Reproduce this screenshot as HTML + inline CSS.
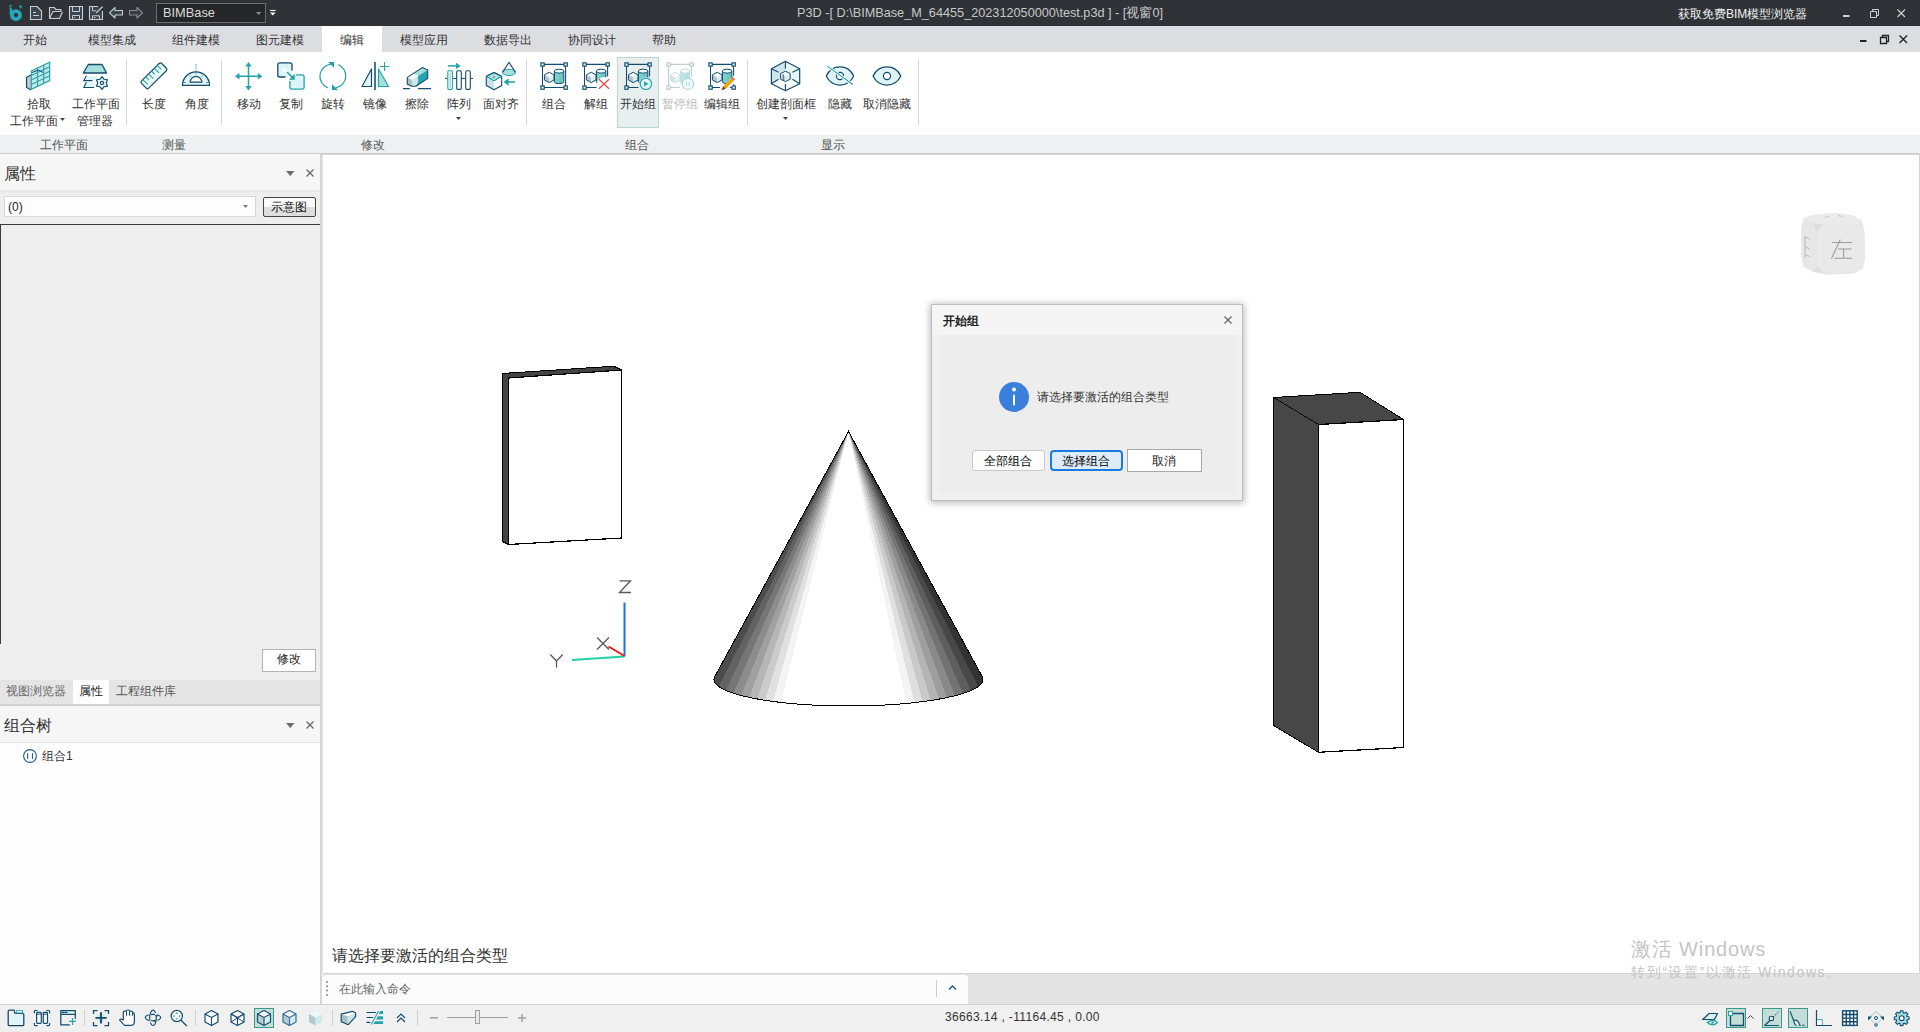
<!DOCTYPE html><html><head><meta charset="utf-8"><style>
*{box-sizing:border-box}
html,body{margin:0;padding:0;width:1920px;height:1032px;overflow:hidden;background:#fff;font-family:"Liberation Sans",sans-serif}
.t{position:absolute;white-space:nowrap;line-height:1}
.r{position:absolute}
svg{position:absolute;overflow:visible}
</style></head><body><div class="r" style="left:0px;top:0px;width:1920px;height:26px;background:#2f3337;"></div>
<svg style="left:0;top:0" width="300" height="26"><circle cx="16" cy="15.2" r="4" fill="none" stroke="#24a8b8" stroke-width="3.8"/><path d="M11 15V9" stroke="#24a8b8" stroke-width="2.6"/><path d="M9.3 5.6H11.8L9.5 8.3H12" stroke="#24a8b8" stroke-width="0.9" fill="none"/><path d="M20.6 5V8.6M18.8 6.8H22.4" stroke="#24a8b8" stroke-width="1"/><path d="M30.5 6.5H37L41.5 11V19.5H30.5Z" fill="#3a4652" stroke="#c9cdd0" stroke-width="1.1" stroke-linejoin="round"/><path d="M33 12.5H36M33 15.5H39" stroke="#c9cdd0" stroke-width="1"/><path d="M49.5 18.5V7.5H54L56 9.5H61V11.5H53L49.5 18.5H59.5L62.5 12" fill="#3a4652" stroke="#c9cdd0" stroke-width="1.1" stroke-linejoin="round"/><path d="M69.5 6.5H82.5V19.5H69.5Z" fill="#3a4652" stroke="#c9cdd0" stroke-width="1.1" stroke-linejoin="round"/><path d="M72.5 6.5V11.5H79.5V6.5M72.5 19.5V15.5H79.5V19.5" stroke="#c9cdd0" stroke-width="1" fill="none"/><rect x="74" y="17" width="1" height="1" fill="#c9cdd0"/><path d="M89.5 6.5H98.5L102.5 10.5V19.5H89.5Z" fill="#3a4652"/><path d="M98 6.5H89.5V19.5H102.5V11" fill="none" stroke="#c9cdd0" stroke-width="1.1" stroke-linejoin="round"/><path d="M92.5 6.5V10.8H96.5M92.5 19.5V15.8H99.5V19.5" stroke="#c9cdd0" stroke-width="1" fill="none"/><path d="M96 13L102.5 6.7" stroke="#2f3337" stroke-width="2.6"/><path d="M96 13L102.5 6.7" stroke="#c9cdd0" stroke-width="1.3"/><rect x="94" y="17" width="1.2" height="1.2" fill="#c9cdd0"/><path d="M109.5 12.8L115 7.5V10.5H122.5V15H115V18Z" fill="#3a4652" stroke="#c9cdd0" stroke-width="1.1" stroke-linejoin="round"/><path d="M142.5 12.8L137 7.5V10.5H129.5V15H137V18Z" fill="#333a42" stroke="#8a9096" stroke-width="1.1" stroke-linejoin="round"/></svg>
<div class="r" style="left:156px;top:3px;width:110px;height:20px;background:#252628;border:1px solid #6e6e6e"></div>
<div class="t" style="left:163px;top:7px;font-size:12.8px;color:#dcdcdc;">BIMBase</div>
<svg style="left:256px;top:12px" width="7" height="4"><path d="M0 0H5.5L2.75 3z" fill="#8a8a8a"/></svg>
<svg style="left:270px;top:9px" width="7" height="8"><path d="M0 1.5H5.6" stroke="#fff" stroke-width="1.1"/><path d="M0 3.6H5.6L2.8 6.6Z" fill="#fff"/></svg>
<div class="t" style="left:797px;top:7px;font-size:12.7px;color:#c8c8c8;">P3D -[ D:\BIMBase_M_64455_202312050000\test.p3d ] - [视窗0]</div>
<div class="t" style="left:1678px;top:8px;font-size:12px;color:#f2f2f2;">获取免费BIM模型浏览器</div>
<svg style="left:1843px;top:15px" width="8" height="3"><rect x="0" y="0" width="6.5" height="2" fill="#cfcfcf"/></svg>
<svg style="left:1870px;top:9px" width="9" height="9"><path d="M2.5 2.5V0.5H8.5V6.5H6.5M0.5 2.5H6.5V8.5H0.5Z" fill="none" stroke="#cfcfcf"/></svg>
<svg style="left:1897px;top:9px" width="9" height="9"><path d="M0.5 0.5L8 8M8 0.5L0.5 8" stroke="#cfcfcf" stroke-width="1.2"/></svg>
<div class="r" style="left:0px;top:26px;width:1920px;height:26px;background:#dcdde0;"></div>
<div class="r" style="left:322px;top:26px;width:60px;height:26px;background:#ffffff;"></div>
<div class="t" style="left:23px;top:34px;font-size:12px;color:#333;">开始</div>
<div class="t" style="left:88px;top:34px;font-size:12px;color:#333;">模型集成</div>
<div class="t" style="left:172px;top:34px;font-size:12px;color:#333;">组件建模</div>
<div class="t" style="left:256px;top:34px;font-size:12px;color:#333;">图元建模</div>
<div class="t" style="left:340px;top:34px;font-size:12px;color:#333;">编辑</div>
<div class="t" style="left:400px;top:34px;font-size:12px;color:#333;">模型应用</div>
<div class="t" style="left:484px;top:34px;font-size:12px;color:#333;">数据导出</div>
<div class="t" style="left:568px;top:34px;font-size:12px;color:#333;">协同设计</div>
<div class="t" style="left:652px;top:34px;font-size:12px;color:#333;">帮助</div>
<svg style="left:1860px;top:40px" width="8" height="3"><rect x="0" y="0" width="6.5" height="2" fill="#222"/></svg>
<svg style="left:1880px;top:35px" width="9" height="9"><path d="M2.5 2.5V0.5H8.5V6.5H6.5M0.5 2.5H6.5V8.5H0.5Z" fill="none" stroke="#222" stroke-width="1.3"/></svg>
<svg style="left:1899px;top:35px" width="9" height="9"><path d="M0.5 0.5L8 8M8 0.5L0.5 8" stroke="#222" stroke-width="1.4"/></svg>
<div class="r" style="left:0px;top:52px;width:1920px;height:83px;background:#ffffff;"></div>
<div class="r" style="left:0px;top:135px;width:1920px;height:18px;background:#eef1f2;"></div>
<div class="r" style="left:0px;top:153px;width:1920px;height:1px;background:#c9cbcd;"></div>
<div class="r" style="left:617px;top:57px;width:42px;height:71px;background:#e7f0ef;border:1px solid #b9d8d3"></div>
<svg style="left:0;top:0" width="1000" height="135"><path d="M31 75L26.5 77.3V87.5L31 90" fill="#bfc9cd" stroke="#134b6e" stroke-width="1.2"/><path d="M31.3 71L49.7 62.3V80.5L31.3 89.3Z" fill="#c5e7ea" stroke="#25a3ab" stroke-width="1.2"/><path d="M37.5 68V86.3M43.7 65.2V83.4M31.3 75.5L49.7 66.8M31.3 80L49.7 71.3M31.3 84.5L49.7 75.8" stroke="#25a3ab" stroke-width="1.1"/><path d="M32 72.5L38.5 70L43 72.5" fill="none" stroke="#134b6e" stroke-width="1"/><path d="M88.3 64.5H102L106.5 73H83.3Z" fill="#a6dfdb" stroke="#134b6e" stroke-width="1.3" stroke-linejoin="round"/><path d="M86.5 75.7L84 80.5H92.5M86.5 82.2L84 87.3H94" fill="none" stroke="#134b6e" stroke-width="1.3"/><path d="M87 76H99L96 80H85ZM87 82.5H96L95 87H85Z" fill="#e0f5f6"/><path d="M102.00 76.70L99.85 79.28L96.54 79.85L97.70 83.00L96.54 86.15L99.85 86.72L102.00 89.30L104.15 86.72L107.46 86.15L106.30 83.00L107.46 79.85L104.15 79.28Z" fill="#e2f4f6" stroke="#134b6e" stroke-width="1.2" stroke-linejoin="round"/><circle cx="102" cy="83" r="1.6" fill="none" stroke="#134b6e" stroke-width="1.1"/><rect x="139.8" y="70.65" width="28.3" height="10.3" rx="1.8" transform="rotate(-44.6 153.95 75.8)" fill="#eaf8f8" stroke="#134b6e" stroke-width="1.2"/><path d="M142.60 79.30l5.00 5.00M145.45 76.45l3.60 3.60M148.30 73.60l5.00 5.00M151.15 70.75l3.60 3.60M154.00 67.90l5.00 5.00M156.85 65.05l4.40 4.40" stroke="#25a3ab" stroke-width="1.1"/><path d="M182.5 85.3A13.5 13.5 0 0 1 209.5 85.3Z" fill="#e0f5f6" stroke="#134b6e" stroke-width="1.3"/><path d="M190.2 82.2A5.8 5.8 0 0 1 201.8 82.2Z" fill="#fff" stroke="#134b6e" stroke-width="1.2"/><path d="M196 64V71" stroke="#25a3ab" stroke-width="1.1" stroke-dasharray="1.2 1"/><path d="M196 72.5V74M184 82.5H185.8M206.2 82.5H208M189.5 75.5L190.5 76.5M202.5 75.5L201.5 76.5" stroke="#25a3ab" stroke-width="1"/><path d="M248.5 65V87.5M237 76.3H260" stroke="#25a3ab" stroke-width="1.5"/><path d="M248.5 62L245.3 66.5H251.7ZM248.5 90.5L245.3 86H251.7ZM235 76.3L239.5 73.1V79.5ZM262.3 76.3L257.8 73.1V79.5Z" fill="#25a3ab"/><rect x="277.8" y="62.8" width="14.2" height="14.2" rx="2" fill="#ddf5f7"/><path d="M285.5 77H279.8A2 2 0 0 1 277.8 75V64.8A2 2 0 0 1 279.8 62.8H290A2 2 0 0 1 292 64.8V70.5" fill="none" stroke="#134b6e" stroke-width="1.3"/><rect x="289.9" y="74.9" width="14.2" height="14.2" rx="2" fill="#ddf5f7"/><path d="M296 74.9H302.1A2 2 0 0 1 304.1 76.9V87.1A2 2 0 0 1 302.1 89.1H291.9A2 2 0 0 1 289.9 87.1V81" fill="none" stroke="#25a3ab" stroke-width="1.3"/><path d="M283 68.5L290 75.5" stroke="#fff" stroke-width="3"/><path d="M287 72L292 77" stroke="#25a3ab" stroke-width="1.7"/><path d="M294.8 79.7V73.8L288.9 79.7Z" fill="#25a3ab"/><path d="M331.5 64.2A12.2 12.2 0 0 0 327.8 87.8" fill="none" stroke="#25a3ab" stroke-width="1.25"/><path d="M338.3 64.6A12.2 12.2 0 0 1 335.5 87.9" fill="none" stroke="#25a3ab" stroke-width="1.25"/><path d="M328.2 62H334V67.9ZM332 84V89.9H337.9Z" fill="#25a3ab"/><path d="M375 62V90" stroke="#0f5676" stroke-width="1.6"/><path d="M371.5 69V86.5H362Z" fill="#e3f6f7" stroke="#134b6e" stroke-width="1.2" stroke-linejoin="round"/><path d="M378.5 69V86.5H388.5Z" fill="#a6dfdb" stroke="#25a3ab" stroke-width="1.2" stroke-linejoin="round"/><path d="M384.5 62V71M380.2 66.5H389" stroke="#25a3ab" stroke-width="1.1"/><path d="M407.3 77.4L413.5 73.3L418.1 76L411.9 79.7Z" fill="#fff"/><path d="M413.5 73.3L422.3 67.6L427.7 70.1L418.1 76Z" fill="#a6dfdb"/><path d="M407.3 77.4L411.9 79.7V86.3L407.3 84.2Z" fill="#aabfc2"/><path d="M411.9 79.7L418.1 76V82.3L416 86.3H411.9Z" fill="#cde8ec"/><path d="M418.1 76L427.7 70.1V78.4L416 86.3L418.1 82.3Z" fill="#25a3ab"/><path d="M407.3 77.4L422.3 67.6L427.7 70.1V78.4L416 86.3H411.9L407.3 84.2Z" fill="none" stroke="#134b6e" stroke-width="1.1" stroke-linejoin="round"/><path d="M403 88.6H409.8M418.1 88.6H431" stroke="#134b6e" stroke-width="1.1"/><path d="M448 65.9H456.5" stroke="#25a3ab" stroke-width="1.5"/><path d="M460.7 65.9L456 62.8V69Z" fill="#25a3ab"/><path d="M445 78.4H473" stroke="#134b6e" stroke-width="1"/><rect x="447.8" y="70.8" width="4.6" height="18.6" rx="1.2" fill="#fff" stroke="#25a3ab" stroke-width="1.1"/><rect x="449.4" y="72.3" width="1.5" height="15.6" fill="#a6dfdb"/><rect x="456.7" y="70.8" width="4.6" height="18.6" rx="1.2" fill="#fff" stroke="#134b6e" stroke-width="1.1"/><rect x="465.7" y="70.8" width="4.6" height="18.6" rx="1.2" fill="#fff" stroke="#134b6e" stroke-width="1.1"/><path d="M486.3 76.3L494 80.8V89.7L486.3 85.5Z" fill="#c9e4e8"/><path d="M486.3 76.3L494 72.4L501.7 76.3L494 80.8Z" fill="#a6e3e3" stroke="#25a3ab" stroke-width="1"/><path d="M486.3 76.3L494 72.4L501.7 76.3V85.5L494 89.7L486.3 85.5Z" fill="none" stroke="#134b6e" stroke-width="1.1" stroke-linejoin="round"/><path d="M486.3 76.3L494 80.8L501.7 76.3" fill="none" stroke="#25a3ab" stroke-width="1"/><rect x="493.2" y="76.3" width="1.6" height="1.6" fill="#e8524f"/><ellipse cx="509" cy="72.4" rx="6.6" ry="3.1" fill="#a6dfdb" stroke="#25a3ab" stroke-width="1"/><path d="M502.5 72.4L509 62.3L515.5 72.4" fill="none" stroke="#134b6e" stroke-width="1.1" stroke-linejoin="round"/><path d="M507.5 82H515" stroke="#25a3ab" stroke-width="1.6"/><path d="M503.6 82L508.6 78.3V85.8Z" fill="#25a3ab"/><path d="M542.5 64.35H565.5999999999999V87.45H542.5Z" fill="none" stroke="#134b6e" stroke-width="1.05"/><rect x="540.9" y="62.85" width="3.3" height="3.3" fill="#e6f6f8" stroke="#134b6e" stroke-width="1.15"/><rect x="564.0" y="62.85" width="3.3" height="3.3" fill="#e6f6f8" stroke="#134b6e" stroke-width="1.15"/><rect x="540.9" y="85.94999999999999" width="3.3" height="3.3" fill="#e6f6f8" stroke="#134b6e" stroke-width="1.15"/><rect x="564.0" y="85.94999999999999" width="3.3" height="3.3" fill="#e6f6f8" stroke="#134b6e" stroke-width="1.15"/><g opacity="1.0"><path d="M554.3999999999999 71.15V81.65A4.7 2 0 0 0 563.8 81.65V71.15Z" fill="#6cc7c1"/><path d="M554.3999999999999 73.15V81.65A4.7 2 0 0 0 559.0999999999999 83.65V73.15Z" fill="#8ad3ce" opacity="0.6"/><ellipse cx="559.0999999999999" cy="71.15" rx="4.7" ry="2" fill="#f2fbfb"/><path d="M554.3999999999999 71.15V81.65A4.7 2 0 0 0 563.8 81.65V71.15A4.7 2 0 0 0 554.3999999999999 71.15A4.7 2 0 0 0 563.8 71.15" fill="none" stroke="#134b6e" stroke-width="1"/><path d="M544.4 74.85L549.1999999999999 72.25L553.9999999999999 74.85L549.1999999999999 77.45Z" fill="#fdfefe"/><path d="M544.4 74.85L549.1999999999999 77.45V82.6L544.4 79.95Z" fill="#b4c6ca"/><path d="M553.9999999999999 74.85L549.1999999999999 77.45V82.6L553.9999999999999 79.95Z" fill="#d5eef0"/><path d="M544.4 74.85L549.1999999999999 72.25L553.9999999999999 74.85V79.95L549.1999999999999 82.6L544.4 79.95Z" fill="none" stroke="#134b6e" stroke-width="1" stroke-linejoin="round"/></g><path d="M607.5999999999999 76.55V64.35H584.5V87.45H596.6" fill="none" stroke="#134b6e" stroke-width="1.05"/><rect x="582.9" y="62.85" width="3.3" height="3.3" fill="#e6f6f8" stroke="#134b6e" stroke-width="1.15"/><rect x="606.0" y="62.85" width="3.3" height="3.3" fill="#e6f6f8" stroke="#134b6e" stroke-width="1.15"/><rect x="582.9" y="85.94999999999999" width="3.3" height="3.3" fill="#e6f6f8" stroke="#134b6e" stroke-width="1.15"/><g opacity="1.0"><path d="M596.3999999999999 71.15V81.65A4.7 2 0 0 0 605.8 81.65V71.15Z" fill="#6cc7c1"/><path d="M596.3999999999999 73.15V81.65A4.7 2 0 0 0 601.0999999999999 83.65V73.15Z" fill="#8ad3ce" opacity="0.6"/><ellipse cx="601.0999999999999" cy="71.15" rx="4.7" ry="2" fill="#f2fbfb"/><path d="M596.3999999999999 71.15V81.65A4.7 2 0 0 0 605.8 81.65V71.15A4.7 2 0 0 0 596.3999999999999 71.15A4.7 2 0 0 0 605.8 71.15" fill="none" stroke="#134b6e" stroke-width="1"/><path d="M586.4 74.85L591.1999999999999 72.25L595.9999999999999 74.85L591.1999999999999 77.45Z" fill="#fdfefe"/><path d="M586.4 74.85L591.1999999999999 77.45V82.6L586.4 79.95Z" fill="#b4c6ca"/><path d="M595.9999999999999 74.85L591.1999999999999 77.45V82.6L595.9999999999999 79.95Z" fill="#d5eef0"/><path d="M586.4 74.85L591.1999999999999 72.25L595.9999999999999 74.85V79.95L591.1999999999999 82.6L586.4 79.95Z" fill="none" stroke="#134b6e" stroke-width="1" stroke-linejoin="round"/></g><circle cx="604" cy="84" r="7" fill="#fff"/><path d="M599 79.3L609 88.8M609 79.3L599 88.8" stroke="#ee4b48" stroke-width="1.3"/><path d="M649.5999999999999 76.55V64.35H626.5V87.45H638.4" fill="none" stroke="#134b6e" stroke-width="1.05"/><rect x="624.9" y="62.85" width="3.3" height="3.3" fill="#e6f3f2" stroke="#134b6e" stroke-width="1.15"/><rect x="648.0" y="62.85" width="3.3" height="3.3" fill="#e6f3f2" stroke="#134b6e" stroke-width="1.15"/><rect x="624.9" y="85.94999999999999" width="3.3" height="3.3" fill="#e6f3f2" stroke="#134b6e" stroke-width="1.15"/><g opacity="1.0"><path d="M638.3999999999999 71.15V81.65A4.7 2 0 0 0 647.8 81.65V71.15Z" fill="#6cc7c1"/><path d="M638.3999999999999 73.15V81.65A4.7 2 0 0 0 643.0999999999999 83.65V73.15Z" fill="#8ad3ce" opacity="0.6"/><ellipse cx="643.0999999999999" cy="71.15" rx="4.7" ry="2" fill="#f2fbfb"/><path d="M638.3999999999999 71.15V81.65A4.7 2 0 0 0 647.8 81.65V71.15A4.7 2 0 0 0 638.3999999999999 71.15A4.7 2 0 0 0 647.8 71.15" fill="none" stroke="#134b6e" stroke-width="1"/><path d="M628.4 74.85L633.1999999999999 72.25L637.9999999999999 74.85L633.1999999999999 77.45Z" fill="#fdfefe"/><path d="M628.4 74.85L633.1999999999999 77.45V82.6L628.4 79.95Z" fill="#b4c6ca"/><path d="M637.9999999999999 74.85L633.1999999999999 77.45V82.6L637.9999999999999 79.95Z" fill="#d5eef0"/><path d="M628.4 74.85L633.1999999999999 72.25L637.9999999999999 74.85V79.95L633.1999999999999 82.6L628.4 79.95Z" fill="none" stroke="#134b6e" stroke-width="1" stroke-linejoin="round"/></g><circle cx="645.9" cy="83.8" r="6.8" fill="#e7f0ef"/><circle cx="645.9" cy="83.8" r="5.7" fill="#e3f4f4" stroke="#25a3ab" stroke-width="1.2"/><path d="M644 81.2V86.4L648.5 83.8Z" fill="#25a3ab"/><path d="M691.5999999999999 76.55V64.35H668.5V87.45H680.4" fill="none" stroke="#bccdd3" stroke-width="1.05"/><rect x="666.9" y="62.85" width="3.3" height="3.3" fill="#f4fafb" stroke="#bccdd3" stroke-width="1.15"/><rect x="690.0" y="62.85" width="3.3" height="3.3" fill="#f4fafb" stroke="#bccdd3" stroke-width="1.15"/><rect x="666.9" y="85.94999999999999" width="3.3" height="3.3" fill="#f4fafb" stroke="#bccdd3" stroke-width="1.15"/><g opacity="0.5"><path d="M680.3999999999999 71.15V81.65A4.7 2 0 0 0 689.8 81.65V71.15Z" fill="#6cc7c1"/><path d="M680.3999999999999 73.15V81.65A4.7 2 0 0 0 685.0999999999999 83.65V73.15Z" fill="#8ad3ce" opacity="0.6"/><ellipse cx="685.0999999999999" cy="71.15" rx="4.7" ry="2" fill="#f2fbfb"/><path d="M680.3999999999999 71.15V81.65A4.7 2 0 0 0 689.8 81.65V71.15A4.7 2 0 0 0 680.3999999999999 71.15A4.7 2 0 0 0 689.8 71.15" fill="none" stroke="#8fb0bd" stroke-width="1"/><path d="M670.4 74.85L675.1999999999999 72.25L679.9999999999999 74.85L675.1999999999999 77.45Z" fill="#fdfefe"/><path d="M670.4 74.85L675.1999999999999 77.45V82.6L670.4 79.95Z" fill="#b4c6ca"/><path d="M679.9999999999999 74.85L675.1999999999999 77.45V82.6L679.9999999999999 79.95Z" fill="#d5eef0"/><path d="M670.4 74.85L675.1999999999999 72.25L679.9999999999999 74.85V79.95L675.1999999999999 82.6L670.4 79.95Z" fill="none" stroke="#8fb0bd" stroke-width="1" stroke-linejoin="round"/></g><circle cx="687.9" cy="83.8" r="5.7" fill="#f2fafa" stroke="#a6d8da" stroke-width="1.1"/><path d="M686.5 81.5V86M689.3 81.5V86" stroke="#a6d8da" stroke-width="1"/><path d="M733.5999999999999 76.55V64.35H710.5V87.45H720.0999999999999M728.3 87.45H733.5999999999999V82.25" fill="none" stroke="#134b6e" stroke-width="1.05"/><rect x="708.9" y="62.85" width="3.3" height="3.3" fill="#e6f6f8" stroke="#134b6e" stroke-width="1.15"/><rect x="732.0" y="62.85" width="3.3" height="3.3" fill="#e6f6f8" stroke="#134b6e" stroke-width="1.15"/><rect x="708.9" y="85.94999999999999" width="3.3" height="3.3" fill="#e6f6f8" stroke="#134b6e" stroke-width="1.15"/><rect x="732.0" y="85.94999999999999" width="3.3" height="3.3" fill="#e6f6f8" stroke="#134b6e" stroke-width="1.15"/><g opacity="1.0"><path d="M722.3999999999999 71.15V81.65A4.7 2 0 0 0 731.8 81.65V71.15Z" fill="#6cc7c1"/><path d="M722.3999999999999 73.15V81.65A4.7 2 0 0 0 727.0999999999999 83.65V73.15Z" fill="#8ad3ce" opacity="0.6"/><ellipse cx="727.0999999999999" cy="71.15" rx="4.7" ry="2" fill="#f2fbfb"/><path d="M722.3999999999999 71.15V81.65A4.7 2 0 0 0 731.8 81.65V71.15A4.7 2 0 0 0 722.3999999999999 71.15A4.7 2 0 0 0 731.8 71.15" fill="none" stroke="#134b6e" stroke-width="1"/><path d="M712.4 74.85L717.1999999999999 72.25L721.9999999999999 74.85L717.1999999999999 77.45Z" fill="#fdfefe"/><path d="M712.4 74.85L717.1999999999999 77.45V82.6L712.4 79.95Z" fill="#b4c6ca"/><path d="M721.9999999999999 74.85L717.1999999999999 77.45V82.6L721.9999999999999 79.95Z" fill="#d5eef0"/><path d="M712.4 74.85L717.1999999999999 72.25L721.9999999999999 74.85V79.95L717.1999999999999 82.6L712.4 79.95Z" fill="none" stroke="#134b6e" stroke-width="1" stroke-linejoin="round"/></g><path d="M719.5 90L735.5 74L738 80L724 93Z" fill="#fff"/><path d="M723.3 86.3L731.5 78.1L733.9 80.5L725.7 88.7Z" fill="#f5a000"/><path d="M731.5 78.1L732.6 77L735 79.4L733.9 80.5Z" fill="#f04a4a"/><path d="M721.5 90.3L723.3 86.3L725.7 88.7Z" fill="#6b3a1a"/><path d="M771.4 68.75L785.4 61.25V76.25L771.4 83.75Z" fill="#cfe7ec"/><path d="M785.4 61.25L799.7 68.75V83.75L785.4 76.25Z" fill="#e8f6f8"/><path d="M771.4 83.75L785.4 76.25L799.7 83.75L785.4 90.7Z" fill="#f7fcfc"/><path d="M785.4 61.25L799.7 68.75V83.75L785.4 90.7L771.4 83.75V68.75Z" fill="none" stroke="#134b6e" stroke-width="1.2" stroke-linejoin="round"/><path d="M785.4 61.25V68.75M771.4 68.75L778.5 72.2M799.7 68.75L792.4 72.2M771.4 83.75L778.5 79.3M799.7 83.75L792.4 79.3M785.4 90.7V84.1" stroke="#134b6e" stroke-width="1.1"/><path d="M780.6 73.5L785.4 71.2L790.2 73.5V79.2L785.4 81.6L780.6 79.2Z" fill="#fff"/><path d="M782.5 74.5L785.4 76V81.3L782.5 79.8Z" fill="#b9cbd0"/><path d="M785.4 76L790 73.8V79.2L785.4 81.5Z" fill="#d8eef1"/><path d="M780.6 73.5L785.4 71.2L790.2 73.5V79.2L785.4 81.6L780.6 79.2Z" fill="none" stroke="#134b6e" stroke-width="1" stroke-linejoin="round"/><path d="M783.2 74.2V80.6" stroke="#134b6e" stroke-width="0.8"/><path d="M826.3 76C832 63.9 848 63.9 853.7 76C848 88.1 832 88.1 826.3 76Z" fill="#e0f4f6" stroke="#134b6e" stroke-width="1.25"/><circle cx="840" cy="76" r="3.6" fill="#fff" stroke="#134b6e" stroke-width="1.2"/><path d="M827.3 66.1L852.8 84.5" stroke="#fff" stroke-width="3"/><path d="M827.3 66.1L852.8 84.5" stroke="#25a3ab" stroke-width="1.1"/><path d="M873.1 76C878.8 63.9 895 63.9 900.8 76C895 88.1 878.8 88.1 873.1 76Z" fill="#e0f4f6" stroke="#134b6e" stroke-width="1.25"/><circle cx="887" cy="76" r="3.6" fill="#fff" stroke="#134b6e" stroke-width="1.2"/></svg>
<div class="t" style="left:-21px;width:120px;text-align:center;top:98px;font-size:12px;color:#333">拾取</div>
<div class="t" style="left:36px;width:120px;text-align:center;top:98px;font-size:12px;color:#333">工作平面</div>
<div class="t" style="left:94px;width:120px;text-align:center;top:98px;font-size:12px;color:#333">长度</div>
<div class="t" style="left:137px;width:120px;text-align:center;top:98px;font-size:12px;color:#333">角度</div>
<div class="t" style="left:189px;width:120px;text-align:center;top:98px;font-size:12px;color:#333">移动</div>
<div class="t" style="left:231px;width:120px;text-align:center;top:98px;font-size:12px;color:#333">复制</div>
<div class="t" style="left:273px;width:120px;text-align:center;top:98px;font-size:12px;color:#333">旋转</div>
<div class="t" style="left:315px;width:120px;text-align:center;top:98px;font-size:12px;color:#333">镜像</div>
<div class="t" style="left:357px;width:120px;text-align:center;top:98px;font-size:12px;color:#333">擦除</div>
<div class="t" style="left:399px;width:120px;text-align:center;top:98px;font-size:12px;color:#333">阵列</div>
<div class="t" style="left:441px;width:120px;text-align:center;top:98px;font-size:12px;color:#333">面对齐</div>
<div class="t" style="left:494px;width:120px;text-align:center;top:98px;font-size:12px;color:#333">组合</div>
<div class="t" style="left:536px;width:120px;text-align:center;top:98px;font-size:12px;color:#333">解组</div>
<div class="t" style="left:578px;width:120px;text-align:center;top:98px;font-size:12px;color:#333">开始组</div>
<div class="t" style="left:620px;width:120px;text-align:center;top:98px;font-size:12px;color:#b8bcbf">暂停组</div>
<div class="t" style="left:662px;width:120px;text-align:center;top:98px;font-size:12px;color:#333">编辑组</div>
<div class="t" style="left:726px;width:120px;text-align:center;top:98px;font-size:12px;color:#333">创建剖面框</div>
<div class="t" style="left:780px;width:120px;text-align:center;top:98px;font-size:12px;color:#333">隐藏</div>
<div class="t" style="left:827px;width:120px;text-align:center;top:98px;font-size:12px;color:#333">取消隐藏</div>
<div class="t" style="left:10px;top:115px;font-size:12px;color:#333;">工作平面</div>
<div class="t" style="left:35px;width:120px;text-align:center;top:115px;font-size:12px;color:#333">管理器</div>
<svg style="left:60px;top:118px" width="6" height="4"><path d="M0 0H5L2.5 3z" fill="#444"/></svg>
<svg style="left:456px;top:117px" width="6" height="4"><path d="M0 0H5L2.5 3z" fill="#444"/></svg>
<svg style="left:783px;top:117px" width="6" height="4"><path d="M0 0H5L2.5 3z" fill="#444"/></svg>
<div class="r" style="left:126px;top:60px;width:1px;height:65px;background:#d5d7d9;"></div>
<div class="r" style="left:221px;top:60px;width:1px;height:65px;background:#d5d7d9;"></div>
<div class="r" style="left:526px;top:60px;width:1px;height:65px;background:#d5d7d9;"></div>
<div class="r" style="left:747px;top:60px;width:1px;height:65px;background:#d5d7d9;"></div>
<div class="r" style="left:918px;top:60px;width:1px;height:65px;background:#d5d7d9;"></div>
<div class="t" style="left:4px;width:120px;text-align:center;top:139px;font-size:12px;color:#555">工作平面</div>
<div class="t" style="left:114px;width:120px;text-align:center;top:139px;font-size:12px;color:#555">测量</div>
<div class="t" style="left:313px;width:120px;text-align:center;top:139px;font-size:12px;color:#555">修改</div>
<div class="t" style="left:577px;width:120px;text-align:center;top:139px;font-size:12px;color:#555">组合</div>
<div class="t" style="left:773px;width:120px;text-align:center;top:139px;font-size:12px;color:#555">显示</div>
<div class="r" style="left:0px;top:154px;width:320px;height:851px;background:#eeeeee;"></div>
<div class="r" style="left:0px;top:154px;width:320px;height:36px;background:#f6f6f6;"></div>
<div class="r" style="left:0px;top:190px;width:320px;height:2px;background:#e8e8e8;"></div>
<div class="t" style="left:4px;top:166px;font-size:16px;color:#333;">属性</div>
<svg style="left:286px;top:171px" width="9" height="6"><path d="M0 0H8.5L4.25 5z" fill="#6a6a6a"/></svg>
<svg style="left:306px;top:169px" width="8" height="8"><path d="M0.5 0.5L7.5 7.5M7.5 0.5L0.5 7.5" stroke="#6a6a6a" stroke-width="1.3"/></svg>
<div class="r" style="left:4px;top:196px;width:252px;height:21px;background:#fdfdfd;border:1px solid #d9d9d9"></div>
<div class="t" style="left:8px;top:201px;font-size:12px;color:#222;">(0)</div>
<svg style="left:243px;top:205px" width="6" height="4"><path d="M0 0H5L2.5 3z" fill="#777"/></svg>
<div class="r" style="left:263px;top:197px;width:53px;height:20px;border:1px solid #444;border-radius:2px;background:linear-gradient(#fbfbfb 0,#fbfbfb 50%,#dedede 50%,#dedede 100%)"></div>
<div class="t" style="left:271px;top:201px;font-size:12px;color:#111;">示意图</div>
<div class="r" style="left:0px;top:224px;width:320px;height:420px;background:#eeeeee;border-top:1px solid #3a3a3a;border-left:1px solid #3a3a3a"></div>
<div class="r" style="left:262px;top:649px;width:54px;height:23px;background:#ffffff;border:1px solid #b5b5b5"></div>
<div class="t" style="left:277px;top:653px;font-size:12px;color:#222;">修改</div>
<div class="r" style="left:0px;top:680px;width:320px;height:24px;background:#e5e5e5;"></div>
<div class="r" style="left:73px;top:680px;width:36px;height:24px;background:#ffffff;"></div>
<div class="t" style="left:6px;top:685px;font-size:12px;color:#666;">视图浏览器</div>
<div class="t" style="left:79px;top:685px;font-size:12px;color:#222;">属性</div>
<div class="t" style="left:116px;top:685px;font-size:12px;color:#555;">工程组件库</div>
<div class="r" style="left:0px;top:704px;width:320px;height:2px;background:#d2d2d2;"></div>
<div class="r" style="left:0px;top:706px;width:320px;height:36px;background:#f6f6f6;"></div>
<div class="r" style="left:0px;top:742px;width:320px;height:1px;background:#e6e6e6;"></div>
<div class="t" style="left:4px;top:718px;font-size:16px;color:#333;">组合树</div>
<svg style="left:286px;top:723px" width="9" height="6"><path d="M0 0H8.5L4.25 5z" fill="#6a6a6a"/></svg>
<svg style="left:306px;top:721px" width="8" height="8"><path d="M0.5 0.5L7.5 7.5M7.5 0.5L0.5 7.5" stroke="#6a6a6a" stroke-width="1.3"/></svg>
<div class="r" style="left:0px;top:743px;width:320px;height:262px;background:#fdfdfd;"></div>
<svg style="left:23px;top:749px" width="14" height="14"><circle cx="7" cy="7" r="6.4" fill="none" stroke="#1d5b86" stroke-width="1.1"/><path d="M4.6 4.2V9.9M9.5 4.2V9.9" stroke="#1d5b86" stroke-width="1.1"/></svg>
<div class="t" style="left:42px;top:750px;font-size:12px;color:#333;">组合1</div>
<div class="r" style="left:320px;top:154px;width:2px;height:851px;background:#d6d6d6;"></div>
<div class="r" style="left:322px;top:155px;width:1px;height:818px;background:#e4e4e4;"></div>
<div class="r" style="left:323px;top:154px;width:1596px;height:819px;background:#ffffff;"></div>
<div class="r" style="left:320px;top:154px;width:1600px;height:1px;background:#d4d4d4;"></div>
<div class="r" style="left:1919px;top:154px;width:1px;height:819px;background:#d4d4d4;"></div>
<svg style="left:0;top:0" width="1920" height="1032" shape-rendering="crispEdges"><path d="M502 373.5L614 366.2L621.5 370L508.5 378L508.5 544.5L502 541.3Z" fill="#444" stroke="#000" stroke-width="1"/><path d="M508.5 378L621.5 370L621.5 538L508.5 544.5Z" fill="#fff" stroke="#000" stroke-width="1.2"/><path d="M1273.5 397.5L1360 392.3L1403.5 419.5L1318.5 424.5L1318.5 752.3L1273.5 725.4Z" fill="#474747" stroke="#000" stroke-width="1"/><path d="M1273.5 397.5L1318.5 424.5" stroke="#000" stroke-width="1"/><path d="M1318.5 424.5L1403.5 419.5L1403.5 747.5L1318.5 752.3Z" fill="#fff" stroke="#000" stroke-width="1.2"/></svg><svg style="left:0;top:0" width="1920" height="1032"><path d="M624.5 602.5V656.5" stroke="#1d6ff2" stroke-width="2"/><path d="M572 660L624.5 656.5" stroke="#1fd2a2" stroke-width="2"/><path d="M608.5 646.5L624.5 656" stroke="#f01818" stroke-width="2"/><path d="M619.5 580.8H630.5L619.5 592.5H631" stroke="#595959" stroke-width="1.3" fill="none"/><path d="M597 637.5L609 649.5M609 637.5L597 649.5" stroke="#595959" stroke-width="1.3" fill="none"/><path d="M550.3 654.5L556.5 661L562.7 654.5M556.5 661V667.5" stroke="#595959" stroke-width="1.3" fill="none"/></svg><div class="r" style="left:700px;top:420px;width:300px;height:300px;background:conic-gradient(from 0deg at 148.5px 11.5px, rgb(51,51,51) 148.389deg 153.049deg, rgb(72,72,72) 153.049deg 154.708deg, rgb(94,94,94) 154.708deg 156.368deg, rgb(115,115,115) 156.368deg 158.027deg, rgb(137,137,137) 158.027deg 159.686deg, rgb(158,158,158) 159.686deg 161.346deg, rgb(180,180,180) 161.346deg 163.005deg, rgb(201,201,201) 163.005deg 164.665deg, rgb(223,223,223) 164.665deg 166.324deg, rgb(244,244,244) 166.324deg 167.983deg, rgb(255,255,255) 167.983deg 194.019deg, rgb(244,244,244) 194.019deg 195.641deg, rgb(224,224,224) 195.641deg 197.262deg, rgb(203,203,203) 197.262deg 198.883deg, rgb(182,182,182) 198.883deg 200.504deg, rgb(160,160,160) 200.504deg 202.126deg, rgb(140,140,140) 202.126deg 203.747deg, rgb(118,118,118) 203.747deg 205.368deg, rgb(98,98,98) 205.368deg 206.989deg, rgb(76,76,76) 206.989deg 211.611deg);clip-path:path('M282.23 256.67L148.5 11.5L14.77 256.67L14.50 257.22L14.29 257.78L14.13 258.33L14.04 258.89L14.00 259.44L14.02 260.00L14.11 260.55L14.25 261.11L14.45 261.66L14.71 262.22L15.03 262.77L15.40 263.32L15.84 263.87L16.33 264.42L16.89 264.96L17.50 265.50L18.16 266.04L18.89 266.58L19.67 267.11L20.51 267.64L21.41 268.17L22.36 268.70L23.36 269.21L24.42 269.73L25.54 270.24L26.71 270.75L27.93 271.25L29.21 271.74L30.54 272.23L31.92 272.72L33.35 273.20L34.84 273.67L36.37 274.13L37.95 274.59L39.58 275.05L41.26 275.49L42.99 275.93L44.76 276.37L46.58 276.79L48.44 277.21L50.35 277.62L52.30 278.02L54.29 278.41L56.33 278.80L58.40 279.18L60.51 279.54L62.67 279.90L64.86 280.25L67.08 280.59L69.35 280.93L71.65 281.25L73.98 281.56L76.34 281.86L78.74 282.16L81.16 282.44L83.62 282.71L86.11 282.98L88.62 283.23L91.16 283.47L93.72 283.70L96.31 283.92L98.92 284.13L101.55 284.33L104.21 284.52L106.88 284.70L109.57 284.87L112.28 285.02L115.01 285.17L117.74 285.30L120.50 285.42L123.26 285.53L126.04 285.63L128.82 285.71L131.62 285.79L134.42 285.85L137.23 285.91L140.04 285.95L142.86 285.98L145.68 285.99L148.50 286.00L151.32 285.99L154.14 285.98L156.96 285.95L159.77 285.91L162.58 285.85L165.38 285.79L168.18 285.71L170.96 285.63L173.74 285.53L176.50 285.42L179.26 285.30L181.99 285.17L184.72 285.02L187.43 284.87L190.12 284.70L192.79 284.52L195.45 284.33L198.08 284.13L200.69 283.92L203.28 283.70L205.84 283.47L208.38 283.23L210.89 282.98L213.38 282.71L215.84 282.44L218.26 282.16L220.66 281.86L223.02 281.56L225.35 281.25L227.65 280.93L229.92 280.59L232.14 280.25L234.33 279.90L236.49 279.54L238.60 279.18L240.67 278.80L242.71 278.41L244.70 278.02L246.65 277.62L248.56 277.21L250.42 276.79L252.24 276.37L254.01 275.93L255.74 275.49L257.42 275.05L259.05 274.59L260.63 274.13L262.16 273.67L263.65 273.20L265.08 272.72L266.46 272.23L267.79 271.74L269.07 271.25L270.29 270.75L271.46 270.24L272.58 269.73L273.64 269.21L274.64 268.70L275.59 268.17L276.49 267.64L277.33 267.11L278.11 266.58L278.84 266.04L279.50 265.50L280.11 264.96L280.67 264.42L281.16 263.87L281.60 263.32L281.97 262.77L282.29 262.22L282.55 261.66L282.75 261.11L282.89 260.55L282.98 260.00L283.00 259.44L282.96 258.89L282.87 258.33L282.71 257.78L282.50 257.22L282.23 256.67Z')"></div><svg style="left:0;top:0" width="1920" height="1032" shape-rendering="crispEdges"><path d="M982.23 676.67L848.5 431.5L714.77 676.67" fill="none" stroke="#000" stroke-width="1"/><path d="M982.23 676.67L982.50 677.22L982.71 677.78L982.87 678.33L982.96 678.89L983.00 679.44L982.98 680.00L982.89 680.55L982.75 681.11L982.55 681.66L982.29 682.22L981.97 682.77L981.60 683.32L981.16 683.87L980.67 684.42L980.11 684.96L979.50 685.50L978.84 686.04L978.11 686.58L977.33 687.11L976.49 687.64L975.59 688.17L974.64 688.70L973.64 689.21L972.58 689.73L971.46 690.24L970.29 690.75L969.07 691.25L967.79 691.74L966.46 692.23L965.08 692.72L963.65 693.20L962.16 693.67L960.63 694.13L959.05 694.59L957.42 695.05L955.74 695.49L954.01 695.93L952.24 696.37L950.42 696.79L948.56 697.21L946.65 697.62L944.70 698.02L942.71 698.41L940.67 698.80L938.60 699.18L936.49 699.54L934.33 699.90L932.14 700.25L929.92 700.59L927.65 700.93L925.35 701.25L923.02 701.56L920.66 701.86L918.26 702.16L915.84 702.44L913.38 702.71L910.89 702.98L908.38 703.23L905.84 703.47L903.28 703.70L900.69 703.92L898.08 704.13L895.45 704.33L892.79 704.52L890.12 704.70L887.43 704.87L884.72 705.02L881.99 705.17L879.26 705.30L876.50 705.42L873.74 705.53L870.96 705.63L868.18 705.71L865.38 705.79L862.58 705.85L859.77 705.91L856.96 705.95L854.14 705.98L851.32 705.99L848.50 706.00L845.68 705.99L842.86 705.98L840.04 705.95L837.23 705.91L834.42 705.85L831.62 705.79L828.82 705.71L826.04 705.63L823.26 705.53L820.50 705.42L817.74 705.30L815.01 705.17L812.28 705.02L809.57 704.87L806.88 704.70L804.21 704.52L801.55 704.33L798.92 704.13L796.31 703.92L793.72 703.70L791.16 703.47L788.62 703.23L786.11 702.98L783.62 702.71L781.16 702.44L778.74 702.16L776.34 701.86L773.98 701.56L771.65 701.25L769.35 700.93L767.08 700.59L764.86 700.25L762.67 699.90L760.51 699.54L758.40 699.18L756.33 698.80L754.29 698.41L752.30 698.02L750.35 697.62L748.44 697.21L746.58 696.79L744.76 696.37L742.99 695.93L741.26 695.49L739.58 695.05L737.95 694.59L736.37 694.13L734.84 693.67L733.35 693.20L731.92 692.72L730.54 692.23L729.21 691.74L727.93 691.25L726.71 690.75L725.54 690.24L724.42 689.73L723.36 689.21L722.36 688.70L721.41 688.17L720.51 687.64L719.67 687.11L718.89 686.58L718.16 686.04L717.50 685.50L716.89 684.96L716.33 684.42L715.84 683.87L715.40 683.32L715.03 682.77L714.71 682.22L714.45 681.66L714.25 681.11L714.11 680.55L714.02 680.00L714.00 679.44L714.04 678.89L714.13 678.33L714.29 677.78L714.50 677.22L714.77 676.67" fill="none" stroke="#000" stroke-width="1"/></svg><svg style="left:1790px;top:205px" width="86" height="80" viewBox="1790 205 86 80"><defs><filter id="bl" x="-10%" y="-10%" width="120%" height="120%"><feGaussianBlur stdDeviation="0.5"/></filter></defs><g filter="url(#bl)"><path d="M1803.8 217.8L1812 214.9L1834.4 213L1851.8 214.9L1862 220.4L1864.5 231.9L1865.2 258L1863 268.8L1853.8 273.6L1826.6 274.8L1813 271.7L1803.3 266.8L1801.2 257L1801.2 227Z" fill="#e7e7e7"/><path d="M1805 218.5L1813 215.5L1834 213.8L1851 215.5L1861 221L1857 224L1822.5 224.1L1816.5 224Z" fill="#ebebeb"/><path d="M1814 224L1822.7 224.1L1817 236Z" fill="#dcdcdc"/><path d="M1817 231.9L1822.7 224.1L1856.7 224.1L1864 231.9L1864.5 258L1862 268L1856.7 271.7L1825.6 273.6L1817 266.8Z" fill="#e9e9e9"/><path d="M1813 271.7L1817 266.8L1825.6 273.6Z" fill="#dedede"/></g><path d="M1832 242.5H1852.3M1840.3 239.5L1831.5 258.5M1838 249H1851.5M1843.6 249V258.3M1834.5 258.3H1852.3" stroke="#9c9c9c" stroke-width="1.1" fill="none"/><path d="M1804.5 236.5L1809.5 239M1805 236.5V258M1805.5 247L1809.5 249M1804.5 245.5H1805.5M1805.5 254.5L1809.5 256.5" stroke="#b2b2b2" stroke-width="0.9" fill="none"/><path d="M1824.5 217.5L1829 216.5M1838.5 215L1843 217.5M1838.5 216.8L1840.5 215" stroke="#bdbdbd" stroke-width="0.8"/></svg><div class="r" style="left:931px;top:304px;width:312px;height:197px;background:#f0f0f0;border:1px solid #bdbdbd;box-shadow:0 1px 7px 1px rgba(0,0,0,0.28)"></div><div class="r" style="left:932px;top:305px;width:310px;height:30px;background:#f5f5f5"></div><div class="r" style="left:939px;top:335px;width:296px;height:158px;background:#ededed"></div><div class="t" style="left:943px;top:315px;font-size:12px;font-weight:bold;color:#222">开始组</div><svg style="left:1224px;top:316px" width="8" height="8"><path d="M0.5 0.5L7.5 7.5M7.5 0.5L0.5 7.5" stroke="#6a6a6a" stroke-width="1.4"/></svg><svg style="left:999px;top:382px" width="30" height="30"><circle cx="15" cy="15" r="15" fill="#3a7fdb"/><circle cx="15" cy="7.5" r="2" fill="#fff"/><rect x="14" y="12.5" width="2" height="11" rx="1" fill="#fff"/></svg><div class="t" style="left:1037px;top:391px;font-size:12px;color:#333">请选择要激活的组合类型</div><div class="r" style="left:972px;top:450px;width:73px;height:21px;background:#fdfdfd;border:1px solid #c8c8c8;border-radius:3px"></div><div class="t" style="left:984px;top:455px;font-size:12px;color:#000">全部组合</div><div class="r" style="left:1050px;top:450px;width:73px;height:21px;background:#deebf8;border:2px solid #1a7ae0;border-radius:4px"></div><div class="t" style="left:1062px;top:455px;font-size:12px;color:#000">选择组合</div><div class="r" style="left:1127px;top:449px;width:75px;height:23px;background:#fff;border:1px solid #a8a8a8"></div><div class="t" style="left:1152px;top:455px;font-size:12px;color:#222">取消</div>
<div class="t" style="left:332px;top:948px;font-size:16px;color:#333;">请选择要激活的组合类型</div>
<div class="r" style="left:323px;top:973px;width:1597px;height:1px;background:#d4d4d4;"></div>
<div class="r" style="left:323px;top:974px;width:1597px;height:31px;background:#e4e4e4;"></div>
<div class="r" style="left:323px;top:975px;width:645px;height:29px;background:#fcfcfc;border-radius:4px 4px 0 0"></div>
<svg style="left:326px;top:981px" width="3" height="15"><circle cx="1" cy="1" r="1" fill="#888"/><circle cx="1" cy="5.3" r="1" fill="#888"/><circle cx="1" cy="9.6" r="1" fill="#888"/><circle cx="1" cy="13.9" r="1" fill="#888"/></svg>
<div class="t" style="left:339px;top:983px;font-size:12px;color:#666;">在此输入命令</div>
<div class="r" style="left:936px;top:980px;width:1px;height:17px;background:#cfcfcf;"></div>
<svg style="left:948px;top:984px" width="10" height="7"><path d="M1 5.5L4.5 2L8 5.5" fill="none" stroke="#1d5b86" stroke-width="1.4"/></svg>
<div class="r" style="left:0px;top:1004px;width:1920px;height:28px;background:#f0f0f0;"></div>
<div class="r" style="left:0px;top:1004px;width:1920px;height:1px;background:#d0d0d0;"></div>
<svg style="left:0;top:1004px" width="1920" height="28"><rect x="10.3" y="11.2" width="11.5" height="8.5" fill="#dcf5f7"/><path d="M14.5 6.9V8.3Q14.5 9.3 15.5 9.3H22.6Q23.8 9.3 23.8 10.5V20.4Q23.8 21.6 22.6 21.6H9.4Q8.2 21.6 8.2 20.4V7.4Q8.2 6.2 9.4 6.2H13.8Q14.5 6.2 14.5 6.9Z" fill="none" stroke="#134b6e" stroke-width="1.3" stroke-linejoin="round"/><rect x="16.6" y="6.6" width="6" height="2.3" fill="#fff" stroke="#25a3ab" stroke-width="0.9"/><path d="M34.4 9.2V7.6Q34.4 6.5 35.5 6.5H37.6M46.4 6.5H48.5Q49.6 6.5 49.6 7.6V9.2M49.6 19V20.6Q49.6 21.7 48.5 21.7H46.4M37.6 21.7H35.5Q34.4 21.7 34.4 20.6V19" fill="none" stroke="#134b6e" stroke-width="1.2"/><rect x="36.6" y="8.4" width="4.7" height="11" rx="0.8" fill="#fff" stroke="#134b6e" stroke-width="1.2"/><rect x="43.3" y="8.4" width="4.2" height="11" rx="0.8" fill="#fff" stroke="#134b6e" stroke-width="1.2"/><path d="M36.6 10.2H41.3M43.3 10.2H47.5" stroke="#134b6e" stroke-width="1"/><rect x="60.8" y="6.8" width="14.5" height="3.4" fill="#e0f5f7"/><path d="M69.9 20.9H60.8V6.5H75.3V14.7M60.8 10.3H75.3" fill="none" stroke="#134b6e" stroke-width="1.25"/><path d="M62.2 8.4H64M65.2 8.4H67" stroke="#134b6e" stroke-width="1.1" stroke-linecap="round"/><path d="M69 17.4H76M72.5 13.9V20.9" stroke="#25a3ab" stroke-width="1.2"/><rect x="84" y="6" width="1" height="16" fill="#cfcfcf"/><path d="M93.5 10V6.5H97.5M104.5 6.5H108.5V10M108.5 18V21.5H104.5M97.5 21.5H93.5V18" fill="none" stroke="#134b6e" stroke-width="1.25"/><circle cx="101" cy="13.9" r="4.6" fill="#cfe9ec" opacity="0.8"/><path d="M101 8.3V19.6M95.4 13.9H106.7" stroke="#134b6e" stroke-width="1.9"/><path d="M123.3 16V8.5Q123.3 7.2 124.6 7.2H125.8Q126.3 6 128 6Q129.6 6 129.8 7.2H131Q132.5 7.2 132.6 8.6Q134.4 8.6 134.4 10.2V17.5Q134.4 21.3 131 21.3H124.6L119.6 16.2Q119.6 15 121 15Z" fill="#fff" stroke="#134b6e" stroke-width="1.2" stroke-linejoin="round"/><path d="M126.5 7.5V11.8M129.5 7.5V11.8M132.5 8.5V11.8" stroke="#134b6e" stroke-width="1.1"/><ellipse cx="153" cy="13.6" rx="7.7" ry="3.3" fill="none" stroke="#134b6e" stroke-width="1.15"/><path d="M148.5 10.5L151 10.1M155 17L157.5 16.7" stroke="#f0f0f0" stroke-width="2"/><ellipse cx="153" cy="13.8" rx="3.3" ry="7.7" fill="none" stroke="#134b6e" stroke-width="1.15"/><path d="M150.2 16.5L150 18.5M155.8 9L156 11" stroke="#f0f0f0" stroke-width="2"/><path d="M155 11.2H158L156.5 13.6ZM155.5 15.2V18.2L153 16.7Z" fill="#134b6e"/><circle cx="176.8" cy="12" r="5.6" fill="#fff" stroke="#134b6e" stroke-width="1.2"/><path d="M176.3 9.2H177.3M176.3 14.8H177.3M174 11.5V12.5M179.6 11.5V12.5" stroke="#25a3ab" stroke-width="1.2" stroke-linecap="round"/><path d="M180.8 16L186.8 22" stroke="#134b6e" stroke-width="1.2"/><rect x="195" y="6" width="1" height="16" fill="#cfcfcf"/><g opacity="1"><path d="M205 10L211.5 6.5L218 10L211.5 13.5Z" fill="#fff"/><path d="M205 10L211.5 13.5V21.5L205 18Z" fill="#fff"/><path d="M211.5 13.5L218 10V18L211.5 21.5Z" fill="#fff"/><path d="M205 10L211.5 6.5L218 10V18L211.5 21.5L205 18Z" fill="none" stroke="#134b6e" stroke-width="1.2" stroke-linejoin="round"/><path d="M205 10L211.5 13.5L218 10M211.5 13.5V21.5" fill="none" stroke="#134b6e" stroke-width="1.1"/></g><g opacity="1"><path d="M231 10L237.5 6.5L244 10L237.5 13.5Z" fill="#fff"/><path d="M231 10L237.5 13.5V21.5L231 18Z" fill="#fff"/><path d="M237.5 13.5L244 10V18L237.5 21.5Z" fill="#fff"/><path d="M231 10L237.5 6.5L244 10V18L237.5 21.5L231 18Z" fill="none" stroke="#134b6e" stroke-width="1.2" stroke-linejoin="round"/><path d="M231 10L237.5 13.5L244 10M237.5 13.5V21.5" fill="none" stroke="#134b6e" stroke-width="1.1"/></g><path d="M231 18L244 10M231 10L244 18" stroke="#134b6e" stroke-width="1"/><rect x="254.5" y="4.5" width="19" height="19" fill="#c4ddd8" stroke="#3d9a88" stroke-width="1"/><g opacity="1"><path d="M257.5 10L264.0 6.5L270.5 10L264.0 13.5Z" fill="#fff"/><path d="M257.5 10L264.0 13.5V21.5L257.5 18Z" fill="#b9cbd0"/><path d="M264.0 13.5L270.5 10V18L264.0 21.5Z" fill="#d4edf0"/><path d="M257.5 10L264.0 6.5L270.5 10V18L264.0 21.5L257.5 18Z" fill="none" stroke="#134b6e" stroke-width="1.2" stroke-linejoin="round"/><path d="M257.5 10L264.0 13.5L270.5 10M264.0 13.5V21.5" fill="none" stroke="#134b6e" stroke-width="1.1"/></g><g opacity="1"><path d="M283 10L289.5 6.5L296 10L289.5 13.5Z" fill="#fff"/><path d="M283 10L289.5 13.5V21.5L283 18Z" fill="#b9cbd0"/><path d="M289.5 13.5L296 10V18L289.5 21.5Z" fill="#d4edf0"/><path d="M283 10L289.5 6.5L296 10V18L289.5 21.5L283 18Z" fill="none" stroke="#2e6e96" stroke-width="1.2" stroke-linejoin="round"/><path d="M283 10L289.5 13.5L296 10M289.5 13.5V21.5" fill="none" stroke="#2e6e96" stroke-width="1.1"/></g><g opacity="1"><path d="M309 10L315.5 6.5L322 10L315.5 13.5Z" fill="#e9f8f9"/><path d="M309 10L315.5 13.5V21.5L309 18Z" fill="#b3c8cd"/><path d="M315.5 13.5L322 10V18L315.5 21.5Z" fill="#d2eaee"/></g><rect x="332" y="6" width="1" height="16" fill="#cfcfcf"/><path d="M341.6 10.5L352.3 7.6L355.2 9.2L347.8 12.2Z" fill="#fff"/><path d="M341.6 10.5L347.8 12.2V20.3L341.6 17.5Z" fill="#aabfc3"/><path d="M347.8 12.2L355.2 9.2V12.5L347.8 20.3Z" fill="#c8e6ea"/><path d="M341.2 10.2L352.3 7.3L355.6 9V12.6L348.2 20.7L341.2 17.7Z" fill="none" stroke="#134b6e" stroke-width="1.2" stroke-linejoin="round"/><path d="M367 8.5H375.6M367 13.5H372.8M367 18.4H369.8" stroke="#134b6e" stroke-width="1.2" stroke-linecap="round"/><path d="M371.3 20.6L378.6 7.1" stroke="#25a3ab" stroke-width="1.1"/><path d="M380.3 7H383.1V10H378.8ZM377.8 12.2H383.1V15.4H376.2ZM375 17.2H383.1V20.1H373.5Z" fill="#25a3ab"/><path d="M397 14L401 10L405 14M397 18L401 14L405 18" fill="none" stroke="#134b6e" stroke-width="1.2"/><rect x="417" y="6" width="1" height="16" fill="#cfcfcf"/><rect x="430" y="13" width="8" height="1.5" fill="#a0a0a0"/><rect x="447" y="13" width="61" height="1" fill="#a0a0a0"/><rect x="475.5" y="6.5" width="4" height="13" fill="#e8e8e8" stroke="#a0a0a0" stroke-width="1"/><path d="M518 14H526M522 10V18" stroke="#a0a0a0" stroke-width="1.5"/><path d="M1706 12.5L1709 9.5H1717.5L1714.5 15.5H1702.5Z" fill="#d9f1f2" stroke="#134b6e" stroke-width="1.2" stroke-linejoin="round"/><path d="M1707.5 18.5Q1712.5 13.8 1717.5 18.5Q1712.5 23.2 1707.5 18.5Z" fill="#fff" stroke="#25a3ab" stroke-width="1.4"/><circle cx="1712.5" cy="18.5" r="1.3" fill="#25a3ab"/><rect x="1726.5" y="4.5" width="19" height="19" fill="#c4ddd8" stroke="#3d9a88" stroke-width="1"/><rect x="1762.5" y="4.5" width="19" height="19" fill="#c4ddd8" stroke="#3d9a88" stroke-width="1"/><rect x="1788.5" y="4.5" width="19" height="19" fill="#c4ddd8" stroke="#3d9a88" stroke-width="1"/><path d="M1730.5 9.5V21.5H1743.5V9.5H1733" fill="none" stroke="#134b6e" stroke-width="1.3"/><rect x="1728.5" y="7.5" width="4" height="4" fill="#fff" stroke="#25a3ab" stroke-width="1"/><path d="M1747.5 14.5L1750.5 11.5L1753.5 14.5" fill="none" stroke="#333" stroke-width="0.9"/><path d="M1764.5 21.5H1779M1764.5 21.5L1771 15.5" stroke="#134b6e" stroke-width="1.2"/><circle cx="1771.4" cy="14.4" r="2.2" fill="#e6f8f8" stroke="#134b6e" stroke-width="1.1"/><path d="M1773 13L1779 7.5" stroke="#134b6e" stroke-width="0.9" stroke-dasharray="1.5 1"/><path d="M1794.5 16.8Q1798.5 17 1799.5 21.2H1796.2Q1794.8 19 1794.5 16.8Z" fill="#e6f8f8"/><path d="M1790.3 7.6L1795 20.5Q1795.5 21.3 1796.5 21.3M1794 16.2Q1798.6 15.6 1799.6 21.3H1800.6M1802.7 21.3H1804.3" fill="none" stroke="#134b6e" stroke-width="1.1" stroke-linecap="round"/><path d="M1816.5 6V21.5H1832" fill="none" stroke="#134b6e" stroke-width="1.2"/><rect x="1817" y="15.6" width="5.3" height="5.4" fill="#fff"/><path d="M1817 15.6H1822.3V21.2" fill="none" stroke="#25a3ab" stroke-width="0.9"/><rect x="1842.6" y="6.8" width="14.6" height="14.6" fill="#fff" stroke="#134b6e" stroke-width="1.4"/><path d="M1846.25 6.8V21.4M1849.9 6.8V21.4M1853.55 6.8V21.4M1842.6 10.45H1857.2M1842.6 14.1H1857.2M1842.6 17.75H1857.2" stroke="#134b6e" stroke-width="1.4"/><path d="M1869 14L1876 7.5L1883 14L1876 20.5Z" fill="none" stroke="#8fb8c8" stroke-width="0.8"/><circle cx="1876" cy="14" r="1.5" fill="#fff" stroke="#134b6e" stroke-width="1"/><path d="M1868 16.5V12.5H1872ZM1884 16.5V12.5H1880Z" fill="#134b6e"/><circle cx="1876" cy="21" r="1.3" fill="none" stroke="#134b6e" stroke-width="0.9"/><path d="M1907.05 12.55L1909.09 12.93L1909.09 15.47L1907.05 15.85L1906.65 16.81L1907.82 18.53L1906.03 20.32L1904.31 19.15L1903.35 19.55L1902.97 21.59L1900.43 21.59L1900.05 19.55L1899.09 19.15L1897.37 20.32L1895.58 18.53L1896.75 16.81L1896.35 15.85L1894.31 15.47L1894.31 12.93L1896.35 12.55L1896.75 11.59L1895.58 9.87L1897.37 8.08L1899.09 9.25L1900.05 8.85L1900.43 6.81L1902.97 6.81L1903.35 8.85L1904.31 9.25L1906.03 8.08L1907.82 9.87L1906.65 11.59Z" fill="#a6dcdc" stroke="#134b6e" stroke-width="1.1" stroke-linejoin="round"/><circle cx="1901.7" cy="14.2" r="2.4" fill="#fff" stroke="#134b6e" stroke-width="1.1"/></svg>
<div class="t" style="left:945px;top:1011px;font-size:12px;color:#333;letter-spacing:0.34px">36663.14 , -11164.45 , 0.00</div>
<div class="t" style="left:1631px;top:939px;font-size:20px;letter-spacing:0.85px;color:#c4c4c4">激活 Windows</div><div class="t" style="left:1631px;top:965px;font-size:14px;letter-spacing:1.6px;color:#c4c4c4">转到“设置”以激活 Windows。</div></body></html>
